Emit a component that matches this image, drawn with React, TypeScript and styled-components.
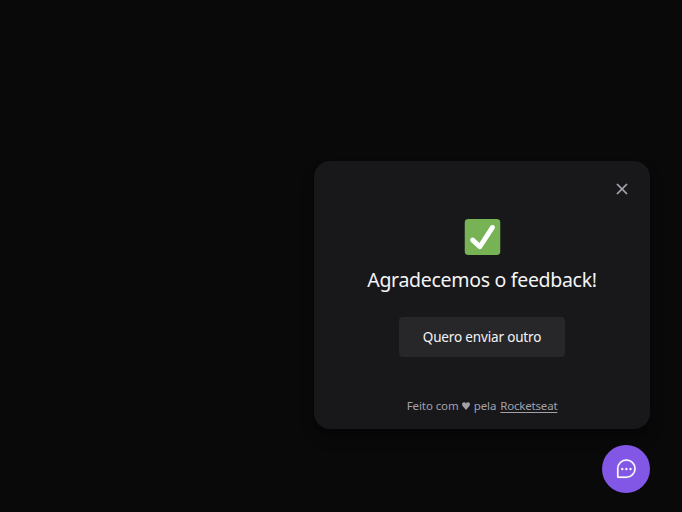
import React from "react";
import styled, { createGlobalStyle } from "styled-components";
import { PiChatTeardropDots, PiXBold } from "react-icons/pi";

const GlobalStyle = createGlobalStyle`
  * { box-sizing: border-box; margin: 0; padding: 0; }
  body {
    background: #09090a;
    color: #f4f4f5;
    font-family: "Noto Sans", "Open Sans", sans-serif;
    overflow: hidden;
  }
  button { font-family: inherit; border: 0; cursor: pointer; }
`;

const Page = styled.main`
  height: 512px;
  padding: 0 32px 19px 0;
  display: flex;
  flex-direction: column;
  align-items: flex-end;
  justify-content: flex-end;
  gap: 16px;
`;

const Card = styled.section`
  width: 336px;
  height: 268px;
  padding: 16px 16px 15px;
  border-radius: 16px;
  background: #18181b;
  display: flex;
  flex-direction: column;
  align-items: center;
  box-shadow: 0 10px 15px -3px rgba(0, 0, 0, 0.35), 0 4px 6px -4px rgba(0, 0, 0, 0.35);
`;

const Header = styled.header`
  width: 100%;
  height: 24px;
  flex-shrink: 0;
  padding-right: 4px;
  display: flex;
  align-items: center;
  justify-content: flex-end;
`;

const CloseButton = styled.button`
  display: flex;
  background: transparent;
  color: #a1a1aa;
`;

const Success = styled.div`
  display: flex;
  flex-direction: column;
  align-items: center;
  padding-top: 18px;
`;

const CheckIcon = styled.svg`
  width: 36px;
  height: 36px;
  transform: translateX(0.5px);
`;

const Title = styled.h1`
  margin-top: 11px;
  height: 28px;
  font-size: 19.5px;
  line-height: 28px;
  font-weight: 400;
  letter-spacing: -0.3px;
  white-space: nowrap;
`;

const AgainButton = styled.button`
  margin-top: 23px;
  width: 166px;
  height: 40px;
  border-radius: 4px;
  background: #27272a;
  color: #f4f4f5;
  font-size: 13.5px;
  line-height: 24px;
  letter-spacing: -0.16px;
  white-space: nowrap;
`;

const Footer = styled.footer`
  margin-top: 41px;
  display: flex;
  align-items: baseline;
  font-size: 11.5px;
  line-height: 16px;
  letter-spacing: -0.08px;
  color: #a1a1aa;
  white-space: pre;
`;

const Heart = styled.svg`
  width: 8px;
  height: 8px;
  margin: 0 4px 0 3px;
`;

const Link = styled.a`
  margin-left: 4px;
  letter-spacing: -0.2px;
  text-decoration: underline;
  text-decoration-thickness: 1px;
  text-underline-offset: 2px;
`;

const Trigger = styled.button`
  width: 48px;
  height: 48px;
  border-radius: 50%;
  background: #8257e5;
  color: #fff;
  display: flex;
  align-items: center;
  justify-content: center;
`;

export default function App() {
  return (
    <Page>
      <GlobalStyle />
      <Card>
        <Header>
          <CloseButton aria-label="Fechar">
            <PiXBold size={16} strokeWidth={5} />
          </CloseButton>
        </Header>
        <Success>
          <CheckIcon viewBox="0 0 36 36">
            <rect width="36" height="36" rx="4" fill="#77b255" />
            <path
              fill="#fff"
              d="M29.28 6.362c-1.156-.751-2.704-.422-3.458.736L14.936 23.877l-5.029-4.65c-1.014-.938-2.596-.875-3.533.138-.937 1.014-.875 2.596.139 3.533l7.209 6.666c.48.445 1.09.665 1.696.665.673 0 1.534-.282 2.099-1.139.332-.506 12.5-19.27 12.5-19.27.751-1.159.421-2.707-.737-3.458z"
            />
          </CheckIcon>
          <Title>Agradecemos o feedback!</Title>
          <AgainButton>Quero enviar outro</AgainButton>
        </Success>
        <Footer>
          <span>Feito com</span>
          <Heart viewBox="0 0 8 8">
            <path
              fill="currentColor"
              d="M4 8C3 6.2 0 4.4 0 2.2 0 1 .9.2 2 .2c.9 0 1.6.5 2 1.2C4.4.7 5.1.2 6 .2c1.1 0 2 .8 2 2C8 4.4 5 6.2 4 8z"
            />
          </Heart>
          <span>pela</span>
          <Link>Rocketseat</Link>
        </Footer>
      </Card>
      <Trigger aria-label="Enviar feedback">
        <PiChatTeardropDots size={24} strokeWidth={2} />
      </Trigger>
    </Page>
  );
}
